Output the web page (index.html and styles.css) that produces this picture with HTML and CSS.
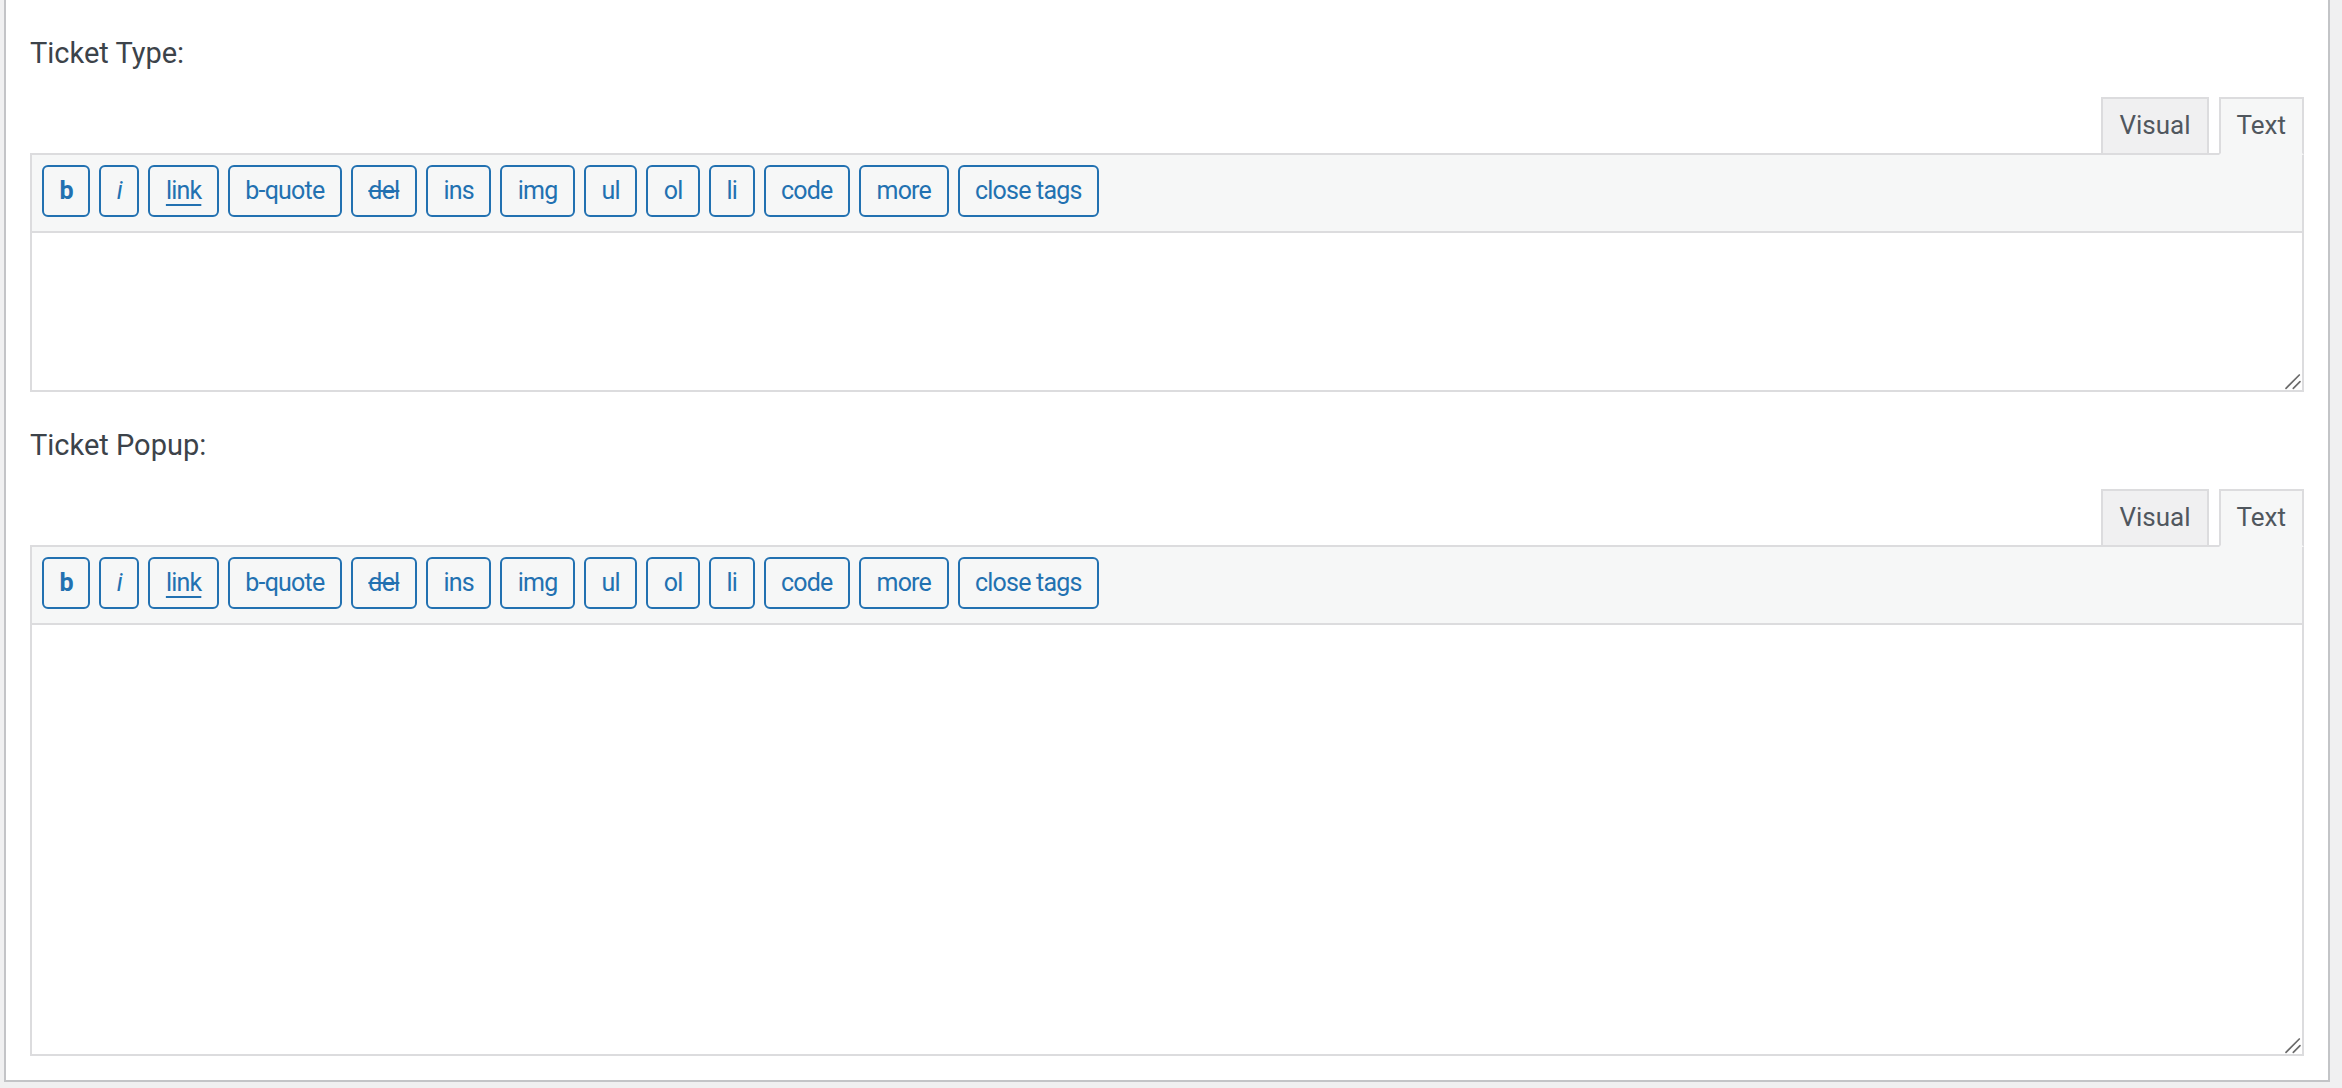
FILE: index.html
```html
<!DOCTYPE html>
<html lang="en">
<head>
<meta charset="utf-8">
<title>Ticket fields</title>
<link rel="stylesheet" href="styles.css">
</head>
<body>
<div class="postbox">
  <div class="field">
    <label class="field-label">Ticket Type:</label>
    <div class="editor-tabs">
      <button class="switch">Visual</button>
      <button class="switch active">Text</button>
    </div>
    <div class="editor">
      <div class="toolbar">
        <button class="qt qt-b">b</button>
        <button class="qt qt-i">i</button>
        <button class="qt qt-link">link</button>
        <button class="qt">b-quote</button>
        <button class="qt qt-del">del</button>
        <button class="qt">ins</button>
        <button class="qt">img</button>
        <button class="qt">ul</button>
        <button class="qt">ol</button>
        <button class="qt">li</button>
        <button class="qt">code</button>
        <button class="qt">more</button>
        <button class="qt">close tags</button>
      </div>
      <div class="area">
        <textarea class="input input-short"></textarea>
        <svg class="grip" width="18" height="18" viewBox="0 0 18 18"><line x1="2" y1="16.3" x2="15.3" y2="3"/><line x1="9.3" y1="16.3" x2="16" y2="9.6"/></svg>
      </div>
    </div>
  </div>
  <div class="field">
    <label class="field-label">Ticket Popup:</label>
    <div class="editor-tabs">
      <button class="switch">Visual</button>
      <button class="switch active">Text</button>
    </div>
    <div class="editor">
      <div class="toolbar">
        <button class="qt qt-b">b</button>
        <button class="qt qt-i">i</button>
        <button class="qt qt-link">link</button>
        <button class="qt">b-quote</button>
        <button class="qt qt-del">del</button>
        <button class="qt">ins</button>
        <button class="qt">img</button>
        <button class="qt">ul</button>
        <button class="qt">ol</button>
        <button class="qt">li</button>
        <button class="qt">code</button>
        <button class="qt">more</button>
        <button class="qt">close tags</button>
      </div>
      <div class="area">
        <textarea class="input input-tall"></textarea>
        <svg class="grip" width="18" height="18" viewBox="0 0 18 18"><line x1="2" y1="16.3" x2="15.3" y2="3"/><line x1="9.3" y1="16.3" x2="16" y2="9.6"/></svg>
      </div>
    </div>
  </div>
</div>
</body>
</html>
```
FILE: styles.css
```css
* {
  box-sizing: border-box;
}

html,
body {
  margin: 0;
  height: 100%;
}

body {
  background: #f0f0f1;
  padding: 0 12px 0 4px;
  font-family: Roboto, "Noto Sans", "Liberation Sans", sans-serif;
  color: #3c434a;
  overflow: hidden;
}

.postbox {
  background: #fff;
  border: 2px solid #c3c4c7;
  border-top: none;
  padding: 0 24px 24px;
}

.field {
  padding-top: 33px;
}

.field-label {
  display: block;
  font-size: 29px;
  line-height: 40px;
  color: #3c434a;
}

.editor-tabs {
  display: flex;
  justify-content: flex-end;
  gap: 10px;
  margin-top: 24px;
  margin-bottom: -2px;
  position: relative;
  z-index: 1;
}

.switch {
  appearance: none;
  margin: 0;
  height: 58px;
  padding: 6px 16px 8px;
  border: 2px solid #dcdcde;
  background: #f0f0f1;
  color: #50575e;
  font-family: inherit;
  font-size: 26px;
  line-height: 40px;
  cursor: pointer;
}

.switch.active {
  background: #f6f7f7;
  border-bottom-color: #f6f7f7;
}

.editor {
  border: 2px solid #dcdcde;
}

.toolbar {
  display: flex;
  gap: 9px;
  background: #f6f7f7;
  border-bottom: 2px solid #dcdcde;
  padding: 10px 10px 14px;
}

.qt {
  appearance: none;
  margin: 0;
  height: 52px;
  padding: 0 15.5px;
  border: 2px solid #2271b1;
  border-radius: 6px;
  background: #f6f7f7;
  color: #2271b1;
  font-family: inherit;
  font-size: 25px;
  line-height: 48px;
  letter-spacing: -0.8px;
  white-space: nowrap;
  cursor: pointer;
}

.qt-b {
  font-weight: 700;
}

.qt-i {
  font-style: italic;
}

.qt-link {
  text-decoration: underline;
  text-decoration-thickness: 2px;
  text-underline-offset: 5px;
}

.qt-del {
  text-decoration: line-through;
  text-decoration-thickness: 2px;
}

.area {
  position: relative;
  background: #fff;
}

.input {
  display: block;
  width: 100%;
  margin: 0;
  border: none;
  outline: none;
  resize: none;
  background: #fff;
  padding: 10px;
  font-family: inherit;
  font-size: 26px;
}

.input-short {
  height: 157px;
}

.input-tall {
  height: 429px;
}

.grip {
  position: absolute;
  right: 0;
  bottom: 0;
  stroke: #6b6b6b;
  stroke-width: 1.7;
  stroke-linecap: round;
}
```
